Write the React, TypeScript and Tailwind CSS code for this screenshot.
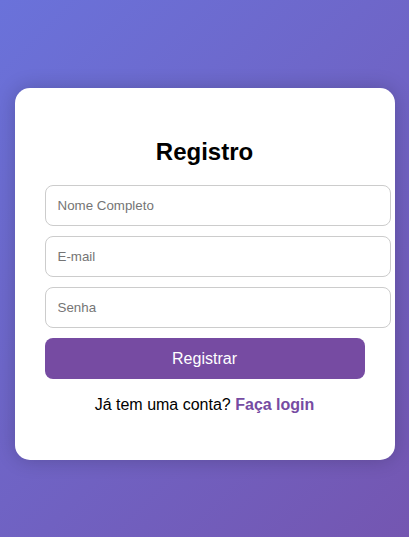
import React from "react";

export default function App() {
  return (
    <div
      className="w-full h-[537px] overflow-hidden bg-[linear-gradient(135deg,#6a72da_0%,#7456b1_100%)] flex justify-center pt-[88px]"
      style={{ fontFamily: '"Liberation Sans", Arial, sans-serif' }}
    >
      <div className="w-[380px] h-[372px] bg-white rounded-[15px] shadow-[0_0_20px_rgba(0,0,0,0.2)] px-[30px] pt-[30px] box-border">
        <h2 className="text-[24px] font-bold text-black text-center leading-[28px] mt-[20px] mb-[19px]">
          Registro
        </h2>
        <form className="flex flex-col" onSubmit={(e) => e.preventDefault()}>
          <input
            type="text"
            placeholder="Nome Completo"
            className="w-[346px] h-[41px] px-[12px] border border-[#ccc] rounded-[8px] text-[13.33px] text-black placeholder:text-[#757575] mb-[10px] outline-none box-border"
          />
          <input
            type="email"
            placeholder="E-mail"
            className="w-[346px] h-[41px] px-[12px] border border-[#ccc] rounded-[8px] text-[13.33px] text-black placeholder:text-[#757575] mb-[10px] outline-none box-border"
          />
          <input
            type="password"
            placeholder="Senha"
            className="w-[346px] h-[41px] px-[12px] border border-[#ccc] rounded-[8px] text-[13.33px] text-black placeholder:text-[#757575] mb-[10px] outline-none box-border"
          />
          <button
            type="submit"
            className="w-[320px] h-[41px] bg-[#764ba2] text-white text-[16px] rounded-[8px] cursor-pointer"
          >
            Registrar
          </button>
        </form>
        <p className="text-center text-[16px] text-black leading-[18px] mt-[17px]">
          Já tem uma conta?{" "}
          <a href="#" className="text-[#764ba2] font-bold">
            Faça login
          </a>
        </p>
      </div>
    </div>
  );
}
